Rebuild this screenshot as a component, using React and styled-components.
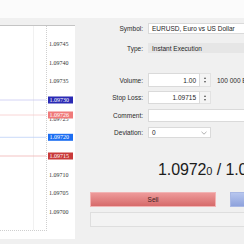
import React from "react";
import styled, { createGlobalStyle } from "styled-components";

const GlobalStyle = createGlobalStyle`
  html, body {
    margin: 0;
    padding: 0;
    width: 244px;
    height: 244px;
    overflow: hidden;
    background: #f0f0f0;
    font-family: "Liberation Sans", Arial, sans-serif;
    color: #1e1e1e;
  }
`;

const Page = styled.div`
  width: 244px;
  height: 244px;
  display: flex;
  flex-direction: column;
  overflow: hidden;
`;

const TopStrip = styled.div`
  height: 18px;
  background: #fbfbfb;
  flex-shrink: 0;
`;

const Body = styled.div`
  display: flex;
  flex: 1;
  background: #f0f0f0;
`;

const ChartPane = styled.div`
  width: 75px;
  flex-shrink: 0;
  padding-top: 7px;
`;

const FormPane = styled.div`
  flex: 1;
  display: flex;
  flex-direction: column;
  padding-top: 5px;
  min-width: 0;
`;

const Row = styled.div`
  display: flex;
  align-items: center;
  height: ${(p) => p.$h}px;
  margin-top: ${(p) => p.$mt || 0}px;
  white-space: nowrap;
`;

const Label = styled.div`
  width: 68px;
  margin-right: 5px;
  text-align: right;
  font-size: 6.5px;
  color: #2a2a2a;
  flex-shrink: 0;
`;

const Field = styled.div`
  box-sizing: border-box;
  height: 100%;
  width: ${(p) => p.$w}px;
  flex-shrink: 0;
  display: flex;
  align-items: center;
  justify-content: ${(p) => (p.$right ? "flex-end" : "space-between")};
  padding: 0 3px 0 3px;
  font-size: 6.5px;
  color: #1e1e1e;
  background: ${(p) => (p.$disabled ? "#e6e6e6" : "#ffffff")};
  border: 1px solid ${(p) => (p.$disabled ? "#e6e6e6" : "#dadada")};
`;

const Spinner = styled.div`
  box-sizing: border-box;
  width: 11px;
  height: 100%;
  flex-shrink: 0;
  display: flex;
  flex-direction: column;
  align-items: center;
  justify-content: center;
  gap: 2px;
  background: #f4f4f4;
  border: 1px solid #e2e2e2;
  border-left: none;
`;

const Arrow = styled.div`
  width: 0;
  height: 0;
  border-left: 1.5px solid transparent;
  border-right: 1.5px solid transparent;
  ${(p) =>
    p.$up
      ? "border-bottom: 2px solid #505050;"
      : "border-top: 2px solid #505050;"}
`;

const Note = styled.span`
  margin-left: 6px;
  font-size: 6.5px;
  color: #2a2a2a;
`;

const PriceLine = styled.div`
  margin-top: 23px;
  padding-left: 83px;
  height: 22px;
  display: flex;
  align-items: baseline;
  white-space: nowrap;
  font-size: 16px;
  color: #1c1c1c;
  letter-spacing: -0.1px;
`;

const SmallDigit = styled.span`
  font-size: 11px;
`;

const ButtonRow = styled.div`
  display: flex;
  gap: 14px;
  margin-top: 9px;
  padding-left: 15px;
`;

const TradeButton = styled.div`
  box-sizing: border-box;
  width: 126px;
  height: 15px;
  flex-shrink: 0;
  display: flex;
  align-items: center;
  justify-content: center;
  font-size: 6.5px;
  color: #3a2020;
  border: 1px solid ${(p) => (p.$buy ? "#a9b8e4" : "#f2b4b4")};
  background: ${(p) =>
    p.$buy
      ? "linear-gradient(#b7c6ee, #8ea2dc)"
      : "linear-gradient(#ee9a9a, #d66a6a)"};
`;

const EmptyBox = styled.div`
  box-sizing: border-box;
  margin-top: 5px;
  margin-left: 15px;
  width: 266px;
  height: 15px;
  flex-shrink: 0;
  border: 1px solid #dedede;
  background: #f3f3f3;
`;

const Chevron = () => (
  <svg width="6" height="4" viewBox="0 0 6 4">
    <path d="M0.5 0.8 L3 3.2 L5.5 0.8" fill="none" stroke="#9a9a9a" strokeWidth="0.8" />
  </svg>
);

const prices = [
  "1.09745", "1.09740", "1.09735", "1.09730", "1.09725",
  "1.09720", "1.09715", "1.09710", "1.09705", "1.09700",
];

const markers = [
  { y: 75, text: "1.09730", box: "#2a2ab4", line: "#c9c9f2" },
  { y: 90, text: "1.09726", box: "#f07a7a", line: "#f7cccc" },
  { y: 112.3, text: "1.09720", box: "#1c6ef2", line: "#bcd2f8" },
  { y: 131, text: "1.09715", box: "#c93a3a", line: "#f0b4b4" },
];

const Chart = () => (
  <svg width="75" height="214" viewBox="0 0 75 214">
    <rect x="0" y="0" width="75" height="214" fill="#ffffff" />
    <line x1="0" y1="0.5" x2="75" y2="0.5" stroke="#c4c4c4" />
    <line x1="33.5" y1="1" x2="33.5" y2="205" stroke="#f1f1f1" />
    <line x1="46.5" y1="1" x2="46.5" y2="205" stroke="#cfcfcf" strokeDasharray="1 1" />
    <line x1="0" y1="205.5" x2="47" y2="205.5" stroke="#cfcfcf" strokeDasharray="1 1" />
    <rect x="47" y="206" width="28" height="8" fill="#ffffff" />
    {prices.map((p, i) => {
      const y = 19 + i * 18.67;
      return (
        <text key={p} x="49" y={y + 2.1} fontSize="6" fill="#333" fontFamily="Liberation Serif, serif">
          {p}
        </text>
      );
    })}
    {markers.map((m) => (
      <g key={m.text}>
        <line x1="0" y1={m.y} x2="46" y2={m.y} stroke={m.line} strokeWidth="0.8" />
        <rect x="48" y={m.y - 3.5} width="25" height="7" fill={m.box} />
        <text x="49.5" y={m.y + 2.1} fontSize="6" fill="#ffffff" fontFamily="Liberation Serif, serif">
          {m.text}
        </text>
      </g>
    ))}
  </svg>
);

export default function App() {
  return (
    <>
      <GlobalStyle />
      <Page>
        <TopStrip />
        <Body>
          <ChartPane>
            <Chart />
          </ChartPane>
          <FormPane>
            <Row $h={11}>
              <Label>Symbol:</Label>
              <Field $w={110}>EURUSD, Euro vs US Dollar</Field>
            </Row>
            <Row $h={10} $mt={9}>
              <Label>Type:</Label>
              <Field $w={110} $disabled>Instant Execution</Field>
            </Row>
            <Row $h={14} $mt={20}>
              <Label>Volume:</Label>
              <Field $w={52} $right>1.00</Field>
              <Spinner>
                <Arrow $up />
                <Arrow />
              </Spinner>
              <Note>100 000 EUR</Note>
            </Row>
            <Row $h={13} $mt={4}>
              <Label>Stop Loss:</Label>
              <Field $w={52} $right>1.09715</Field>
              <Spinner>
                <Arrow $up />
                <Arrow />
              </Spinner>
            </Row>
            <Row $h={13} $mt={5}>
              <Label>Comment:</Label>
              <Field $w={110} />
            </Row>
            <Row $h={11} $mt={5}>
              <Label>Deviation:</Label>
              <Field $w={63}>
                <span>0</span>
                <Chevron />
              </Field>
            </Row>
            <PriceLine>
              1.0972<SmallDigit>0</SmallDigit>&nbsp;/ 1.09722
            </PriceLine>
            <ButtonRow>
              <TradeButton>Sell</TradeButton>
              <TradeButton $buy>Buy</TradeButton>
            </ButtonRow>
            <EmptyBox />
          </FormPane>
        </Body>
      </Page>
    </>
  );
}
